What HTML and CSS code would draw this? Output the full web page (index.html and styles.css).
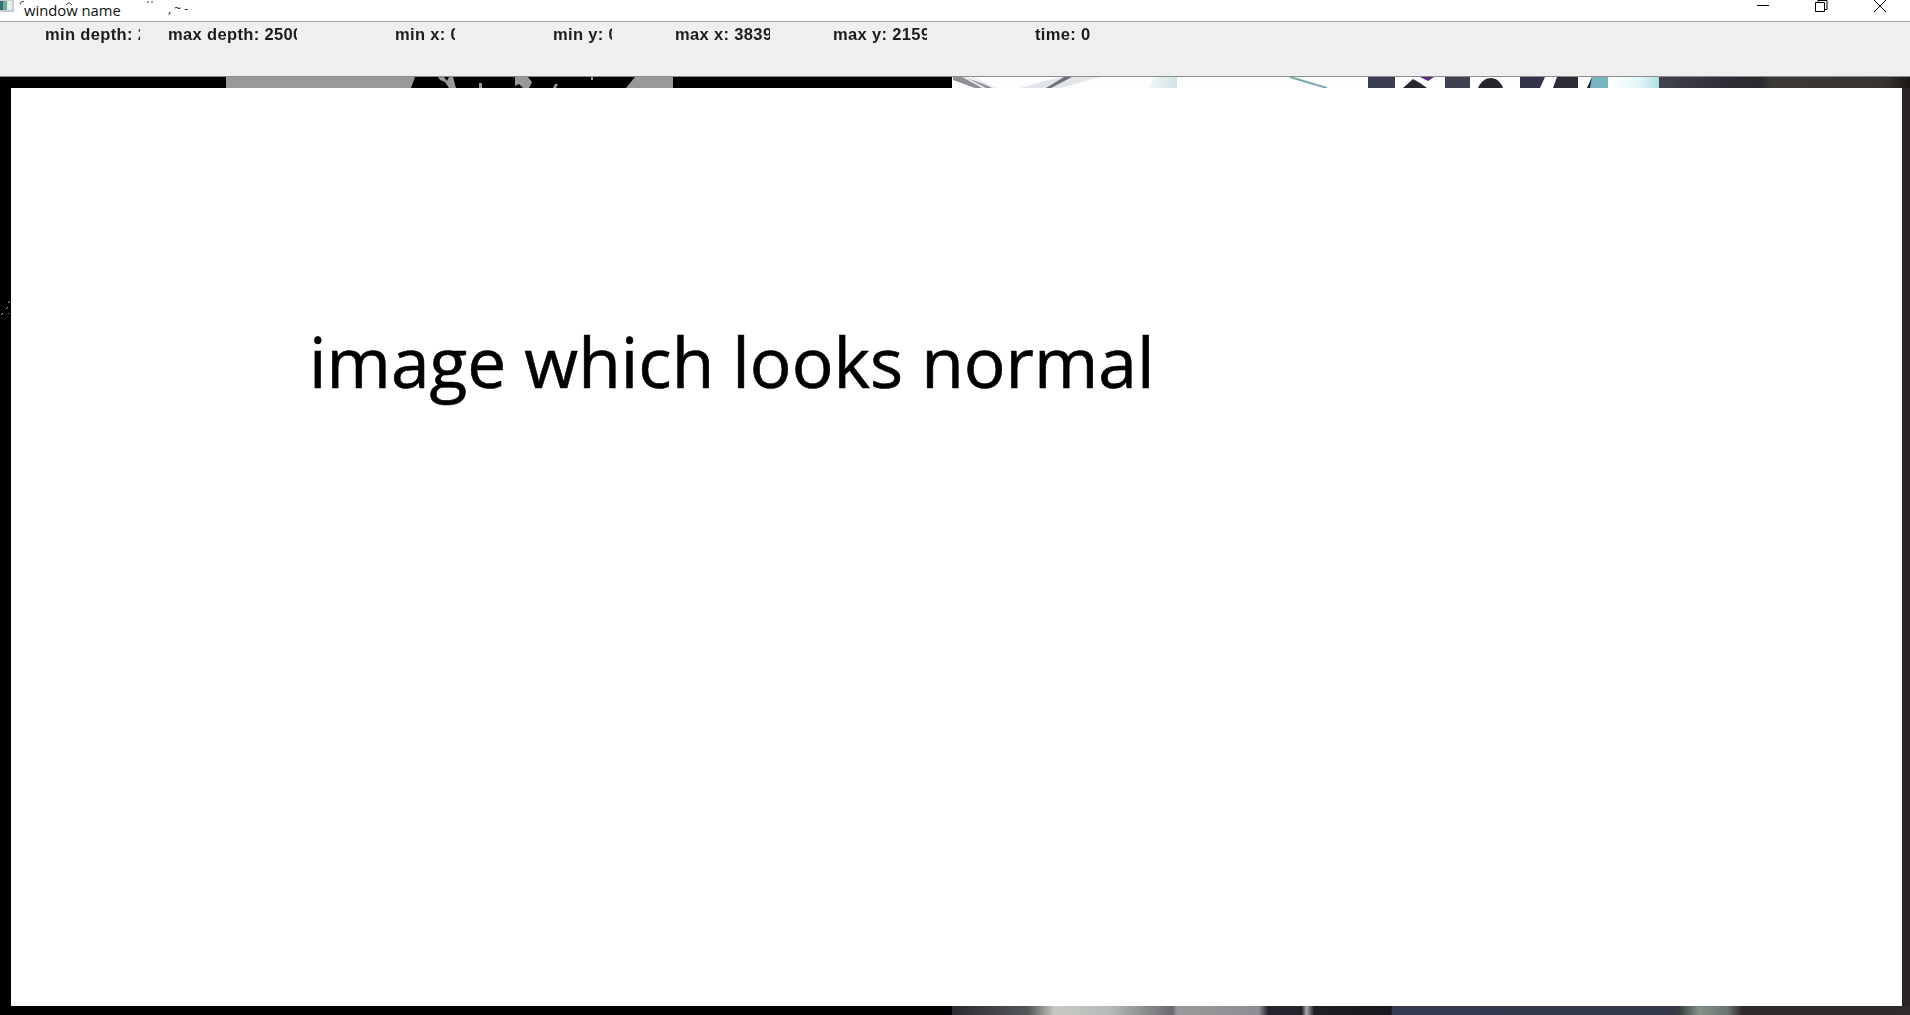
FILE: index.html
```html
<!DOCTYPE html>
<html lang="en">
<head>
<meta charset="utf-8">
<title>window name</title>
<link rel="stylesheet" href="styles.css">
</head>
<body>
<header class="titlebar">
  <svg class="app-icon" width="14" height="12" viewBox="0 0 14 12"><rect width="14" height="12" fill="#c9ced2"/><rect x="0" y="1" width="3" height="9" fill="#2f6f78"/><rect x="3" y="1" width="4" height="9" fill="#6fae96"/><rect x="7" y="1" width="5" height="9" fill="#e8eff2"/></svg>
  <span class="title">window name</span>
  <span class="title-noise">, ~ -</span>
  <svg class="title-marks" width="170" height="10" viewBox="0 0 170 10"><path d="M20 4.500C20.500 2 22 1 24 1.500M66 5L69 2.500L72 5M148 1v2M152 1v2" stroke="#333" fill="none"/></svg>
  <div class="controls">
    <svg class="control" width="14" height="14" viewBox="0 0 14 14"><path d="M2 5.500H14" stroke="#000" fill="none"/></svg>
    <svg class="control" width="14" height="14" viewBox="0 0 14 14"><path d="M1.500 2.500H10.500V11.500H1.500ZM4 2V0.500H13V9.500H11" stroke="#000" fill="none"/></svg>
    <svg class="control" width="14" height="14" viewBox="0 0 14 14"><path d="M1 0L13 12M13 0L1 12" stroke="#000" fill="none"/></svg>
  </div>
</header>
<section class="toolbar">
  <span class="field f1">min depth: 2</span>
  <span class="field f2">max depth: 2500</span>
  <span class="field f3">min x: 0</span>
  <span class="field f4">min y: 0</span>
  <span class="field f5">max x: 3839</span>
  <span class="field f6">max y: 2159</span>
  <span class="field f7">time: 0</span>
</section>
<main class="stage">
  <svg class="backdrop" viewBox="0 0 1910 938" preserveAspectRatio="none">
    <defs>
      <linearGradient id="topRight" x1="1659" x2="1910" y1="0" y2="0" gradientUnits="userSpaceOnUse">
        <stop offset="0" stop-color="#41434f"/>
        <stop offset="0.3" stop-color="#2c2c34"/>
        <stop offset="0.4" stop-color="#2a2a2f"/>
        <stop offset="0.45" stop-color="#3c3835"/>
        <stop offset="0.9" stop-color="#3a3431"/>
        <stop offset="1" stop-color="#1c1616"/>
      </linearGradient>
      <linearGradient id="topTeal" x1="1147" x2="1178" y1="0" y2="0" gradientUnits="userSpaceOnUse">
        <stop offset="0" stop-color="#f6f8f9"/>
        <stop offset="1" stop-color="#cfe2e4"/>
      </linearGradient>
      <linearGradient id="cyanFade" x1="1608" x2="1660" y1="0" y2="0" gradientUnits="userSpaceOnUse">
        <stop offset="0" stop-color="#ffffff"/>
        <stop offset="0.6" stop-color="#e4f6f8"/>
        <stop offset="1" stop-color="#a9dfe6"/>
      </linearGradient>
      <linearGradient id="bottom" x1="952" x2="1910" y1="0" y2="0" gradientUnits="userSpaceOnUse">
        <stop offset="0" stop-color="#2a2a30"/>
        <stop offset="0.08" stop-color="#55585a"/>
        <stop offset="0.107" stop-color="#c9c8c0"/>
        <stop offset="0.165" stop-color="#b3bbb8"/>
        <stop offset="0.23" stop-color="#6a6a6e"/>
        <stop offset="0.235" stop-color="#9a9a9c"/>
        <stop offset="0.32" stop-color="#8e8e92"/>
        <stop offset="0.33" stop-color="#24242c"/>
        <stop offset="0.365" stop-color="#24242c"/>
        <stop offset="0.37" stop-color="#a8a8a8"/>
        <stop offset="0.378" stop-color="#1e1e26"/>
        <stop offset="0.458" stop-color="#17171c"/>
        <stop offset="0.46" stop-color="#353a50"/>
        <stop offset="0.75" stop-color="#33374b"/>
        <stop offset="0.76" stop-color="#3a3f42"/>
        <stop offset="0.78" stop-color="#84928a"/>
        <stop offset="0.81" stop-color="#6a726e"/>
        <stop offset="0.825" stop-color="#2e2a2c"/>
        <stop offset="1" stop-color="#2f2a2c"/>
      </linearGradient>
    </defs>
    <rect width="1910" height="938" fill="#000"/>
    <g class="soft">
      <path d="M226 0H415L411 11H226Z" fill="#999"/>
      <path d="M635 0H673V11H626Z" fill="#999"/>
      <path d="M438 0H444L447 4L449 0H453L456 11H449L445 5L440 3ZM515 0H528L532 5L529 11H523L519 7L515 9ZM479 6H482V11H479ZM555 7H558L556 11H553ZM591 0H593V3H591Z" fill="#999"/>
      <rect x="952" y="0" width="707" height="11" fill="#fdfdfe"/>
      <path d="M953 0H965L994 11H975L953 3Z" fill="#8d8f96"/>
      <path d="M962 0H966L986 11H982ZM970 0H973L996 11H992Z" fill="#e8e8ea"/>
      <path d="M1020 11L1060 0H1100L1060 11Z" fill="#e2e6ea"/>
      <path d="M1064 0H1072L1051 11H1046Z" fill="#70727c"/>
      <path d="M1147 11L1155 0H1177V11Z" fill="url(#topTeal)"/>
      <path d="M1290 0L1327 11" stroke="#7fa8b2" stroke-width="2" fill="none"/>
      <rect x="1368" y="0" width="27" height="11" fill="#3a3c50"/>
      <rect x="1445" y="0" width="25" height="11" fill="#3f4052"/>
      <path d="M1403 11L1413 2L1420 6L1427 11Z" fill="#26262c"/>
      <path d="M1420 0H1434L1428 4Z" fill="#5a2a8a"/>
      <path d="M1478 11C1481 4 1486 1 1491 1C1496 1 1501 5 1503 11Z" fill="#26262c"/>
      <path d="M1520 0H1545L1540 11H1520Z" fill="#33344a"/>
      <path d="M1553 11L1557 0H1578V11Z" fill="#2b2c36"/>
      <path d="M1587 11L1592 0H1596L1591 11Z" fill="#22242c"/>
      <path d="M1592 0H1608V11H1590Z" fill="#78b4c0"/>
      <rect x="1608" y="0" width="51" height="11" fill="url(#cyanFade)"/>
      <rect x="1659" y="0" width="251" height="11" fill="url(#topRight)"/>
    </g>
    <rect x="1902" y="11" width="8" height="927" fill="#2a2627"/>
    <rect x="952" y="929" width="958" height="9" fill="url(#bottom)"/>
    <path d="M8 226l2-2M6 232l2-2M9 236v1M1 238l2-2" stroke="#aaa" fill="none"/>
  </svg>
  <div class="panel">
    <p class="caption">image which looks normal</p>
  </div>
</main>
</body>
</html>
```
FILE: styles.css
```css
html, body {
  margin: 0;
  padding: 0;
  width: 1910px;
  height: 1015px;
  overflow: hidden;
  background: #000;
}
body {
  display: flex;
  flex-direction: column;
}
.titlebar {
  position: relative;
  height: 21px;
  background: #fff;
  border-bottom: 1px solid #a8a8a8;
  display: flex;
  align-items: flex-start;
  flex: none;
}
.app-icon {
  flex: none;
  width: 14px;
}
.title {
  margin: 1px 0 0 10px;
  width: 144px;
  font: 14.800px/18px "Open Sans", "Noto Sans", sans-serif;
  color: #111;
}
.title-noise {
  font: 12px/18px "Open Sans", sans-serif;
  color: #222;
}
.title-marks {
  position: absolute;
  left: 0;
  top: 0;
}
.controls {
  margin-left: auto;
  display: flex;
  gap: 45px;
  padding-right: 23px;
}
.control {
  display: block;
}
.toolbar {
  height: 54px;
  background: #efefef;
  border-bottom: 1px solid #8c8c8c;
  display: flex;
  align-items: flex-start;
  flex: none;
  padding-left: 45px;
}
.field {
  display: block;
  margin-top: 3px;
  font: bold 16.500px/18px "Liberation Sans", Arial, sans-serif;
  letter-spacing: 0.35px;
  color: #1c1c1c;
  white-space: nowrap;
  overflow: hidden;
  flex: none;
  filter: blur(0.3px);
}
.f1 { width: 95px; margin-right: 28px; }
.f2 { width: 129px; margin-right: 98px; }
.f3 { width: 60px; margin-right: 98px; }
.f4 { width: 59px; margin-right: 63px; }
.f5 { width: 95px; margin-right: 63px; }
.f6 { width: 94px; margin-right: 108px; }
.f7 { width: 80px; }
.stage {
  position: relative;
  flex: 1;
  padding: 11px 8px 9px 11px;
  display: flex;
  min-height: 0;
}
.backdrop {
  position: absolute;
  inset: 0;
  width: 100%;
  height: 100%;
}
.soft {
  filter: blur(0.6px);
}
.panel {
  position: relative;
  flex: 1;
  background: #fff;
  padding: 225px 0 0 298px;
}
.caption {
  margin: 0;
  font: 69.500px/96px "Open Sans", "Noto Sans", sans-serif;
  -webkit-text-stroke: 0.6px #000;
  color: #000;
  white-space: nowrap;
}
```
